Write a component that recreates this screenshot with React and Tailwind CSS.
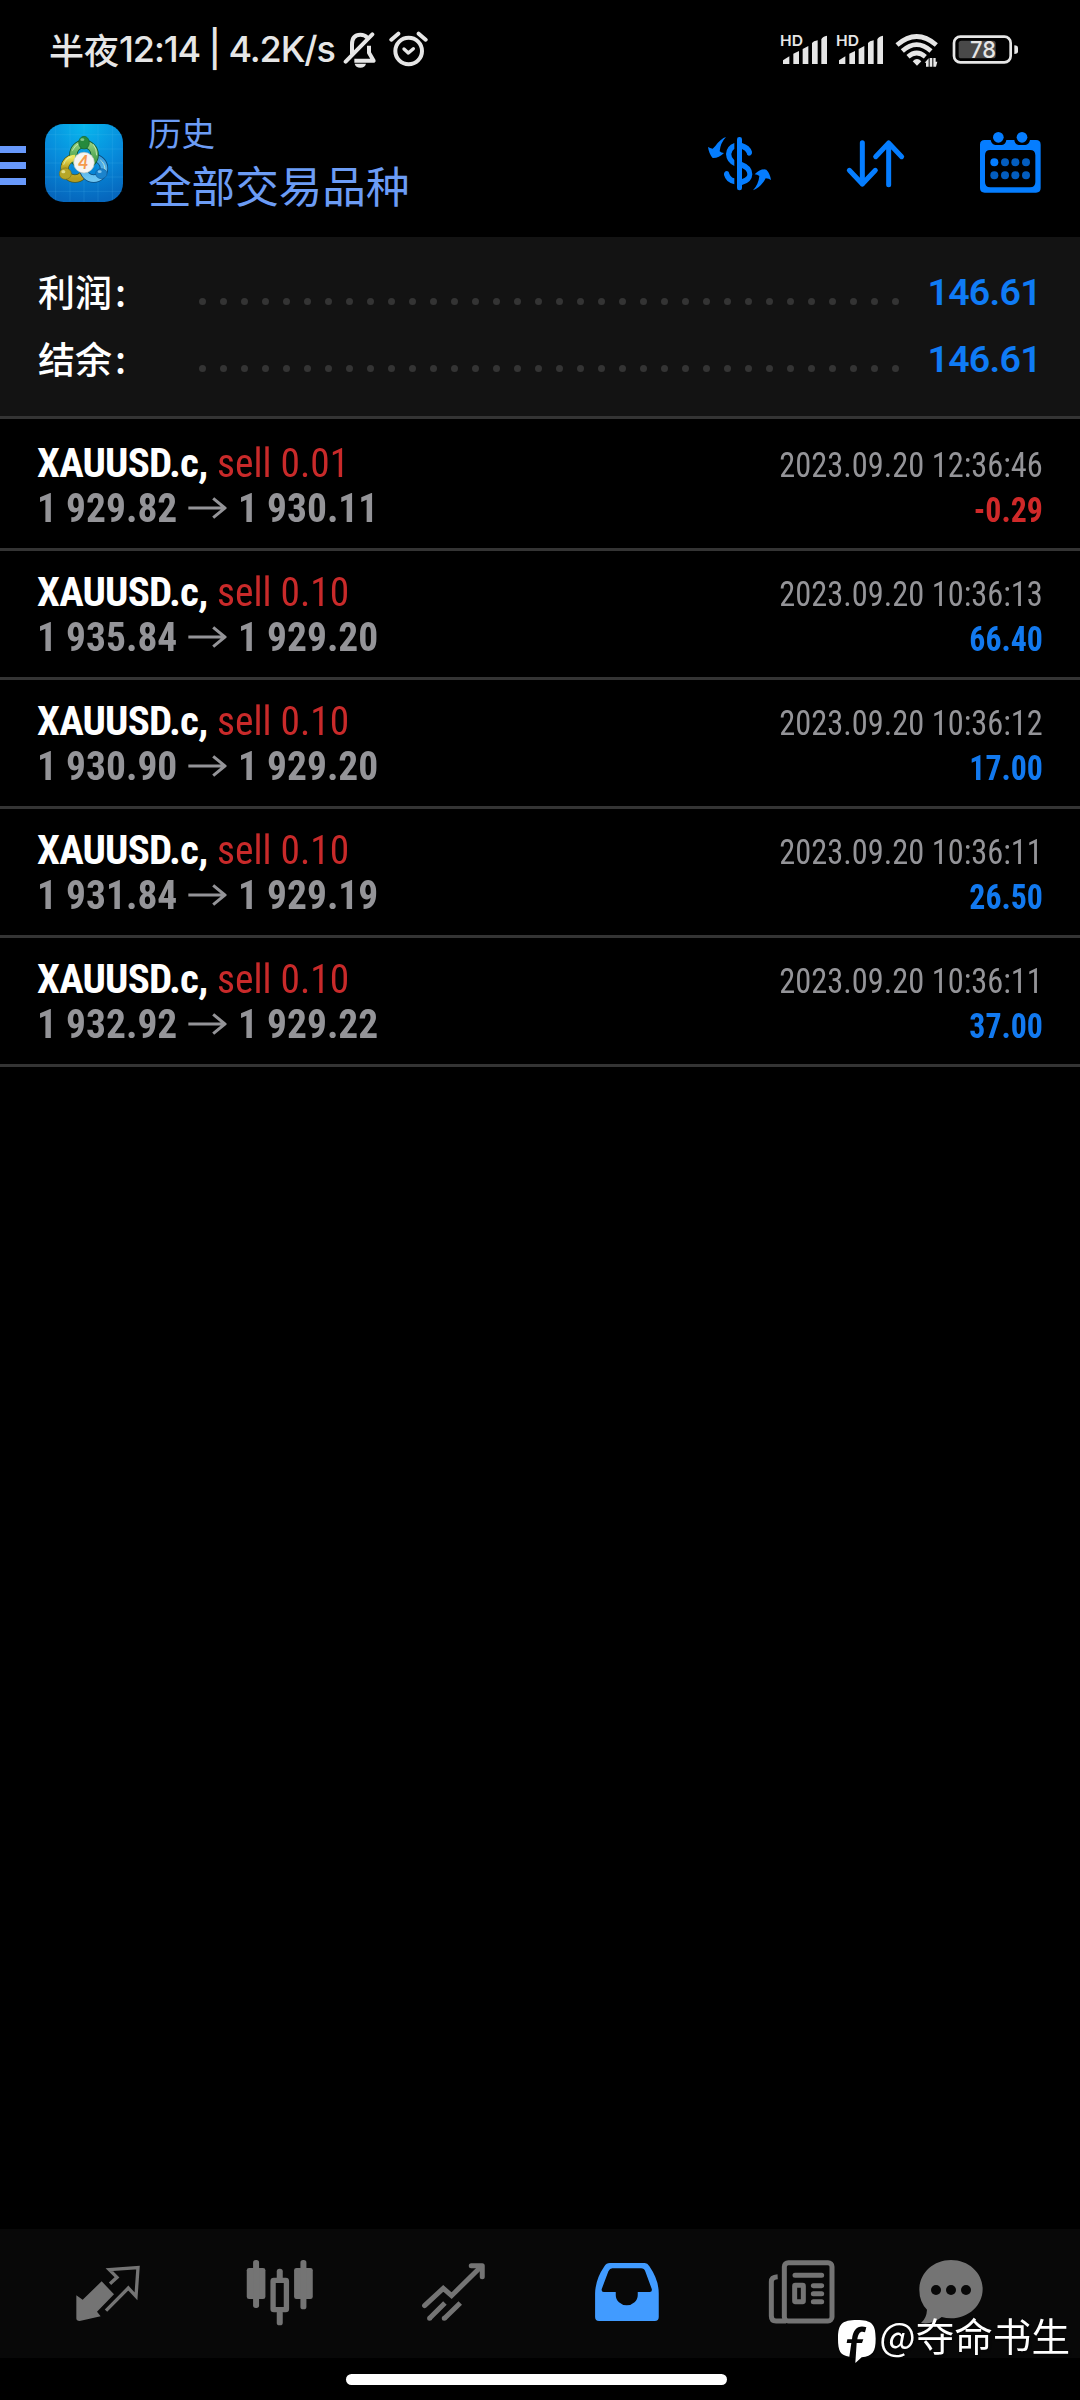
import React from 'react';

const trades = [
  { id: 1, symbol: 'XAUUSD.c', side: 'sell 0.01', open: '1 929.82', close: '1 930.11', time: '2023.09.20 12:36:46', profit: '-0.29' },
  { id: 2, symbol: 'XAUUSD.c', side: 'sell 0.10', open: '1 935.84', close: '1 929.20', time: '2023.09.20 10:36:13', profit: '66.40' },
  { id: 3, symbol: 'XAUUSD.c', side: 'sell 0.10', open: '1 930.90', close: '1 929.20', time: '2023.09.20 10:36:12', profit: '17.00' },
  { id: 4, symbol: 'XAUUSD.c', side: 'sell 0.10', open: '1 931.84', close: '1 929.19', time: '2023.09.20 10:36:11', profit: '26.50' },
  { id: 5, symbol: 'XAUUSD.c', side: 'sell 0.10', open: '1 932.92', close: '1 929.22', time: '2023.09.20 10:36:11', profit: '37.00' },
];

const summary = [
  { label: '利润', value: '146.61' },
  { label: '结余', value: '146.61' },
];

const DOTS = Array.from({ length: 34 });

function StatusBar() {
  return (
    <div className="h-[100px] shrink-0 flex items-start justify-between pl-[49px] pr-[60px] pt-[30px] text-[#e6e6e6]">
      <div className="flex items-center h-[39px] whitespace-nowrap">
        <span className="-mt-0.5 font-['Noto_Sans_CJK_SC',sans-serif] font-medium text-[35px] leading-[39px]">半夜</span>
        <span className="font-['Inter',sans-serif] font-medium text-[36px] leading-[39px] tracking-[-1.1px] w-[224px]">
          12:14 | 4.2K/s
        </span>
        {/* Muted bell + alarm */}
        <svg width="85" height="39" viewBox="1030 90 255 117" fill="none" stroke="currentColor" strokeWidth="12">
          <path d="M1057 163V133C1057 112 1067 104 1082 104C1091 104 1098 107 1103 113" />
          <path d="M1038 185L1118 103" strokeLinecap="round" />
          <path d="M1108 137V158L1122 182H1064" strokeLinejoin="round" />
          <path d="M1065 191H1099Q1096 203 1082 203Q1068 203 1065 191Z" fill="currentColor" stroke="none" />
          <circle cx="1227" cy="153" r="40" />
          <path d="M1175 119L1196 101M1278 119L1257 101" strokeLinecap="round" />
          <path d="M1213 147L1226 159L1241 146" strokeLinecap="round" strokeLinejoin="round" strokeWidth="10" />
        </svg>
      </div>
      <svg className="mt-0.5 font-['Inter',sans-serif]" width="240" height="36" viewBox="300 96 720 108" fill="currentColor">
        {[0, 168].map((dx) => (
          <g key={dx} transform={`translate(${dx} 0)`}>
            <text x="300" y="137" fontSize="44" fontWeight="600" textLength="69" lengthAdjust="spacingAndGlyphs">HD</text>
            <path d="M309 181L328 169V192H309ZM340 161L357 153V192H340ZM368 147L385 138V192H368ZM396 129Q400 123 413 121V192H396ZM424 118Q428 109 441 107V192H424Z" />
          </g>
        ))}
        <g fill="none" stroke="currentColor" strokeWidth="14">
          <path d="M651 135Q710 84 769 135" />
          <path d="M667 153Q710 115 753 153" />
          <path d="M684 170Q710 148 736 170" />
        </g>
        <path d="M698 184Q711 170 724 184L711 197Z" />
        <path d="M734 188L746 175V200H738V188ZM749 174H757V200H749ZM760 174H767V185H772L768 200H760Z" />
        <rect x="822" y="110" width="170" height="77" rx="19" fill="none" stroke="currentColor" strokeWidth="8" />
        <rect x="836" y="122" width="111" height="53" rx="8" fill="#494949" />
        <path d="M1003 136Q1014 137 1014 143V155Q1014 161 1003 162Z" />
        <text x="870" y="175" fontSize="70" fontWeight="500" textLength="78" lengthAdjust="spacingAndGlyphs">78</text>
      </svg>
    </div>
  );
}

function AppLogo() {
  return (
    <svg width="78" height="78" viewBox="0 0 234 234">
      <defs>
        <radialGradient id="sky" cx="0.5" cy="0" r="1">
          <stop offset="0" stopColor="#08b8ee" />
          <stop offset="0.55" stopColor="#078bdb" />
          <stop offset="1" stopColor="#0667bd" />
        </radialGradient>
        <linearGradient id="green" x1="0" y1="0" x2="0" y2="1">
          <stop offset="0" stopColor="#8fce7c" />
          <stop offset="1" stopColor="#2d8f3b" />
        </linearGradient>
        <linearGradient id="gold" x1="0" y1="0" x2="0" y2="1">
          <stop offset="0" stopColor="#ece45b" />
          <stop offset="1" stopColor="#b59d1f" />
        </linearGradient>
        <linearGradient id="aqua" x1="0" y1="0" x2="0" y2="1">
          <stop offset="0" stopColor="#3c9fe0" />
          <stop offset="1" stopColor="#6cc5f2" />
        </linearGradient>
      </defs>
      <rect width="234" height="234" rx="56" fill="url(#sky)" />
      <path d="M32 4V230M75 2V232M117 0V234M159 2V232M202 4V230M2 32H232M0 75H234M0 117H234M0 159H234M2 202H232" stroke="#5cc4f5" strokeOpacity="0.25" strokeWidth="2" />
      <g fill="none">
        <circle cx="90" cy="133" r="31" stroke="#4f5a1c" strokeWidth="25" />
        <circle cx="90" cy="133" r="31" stroke="url(#gold)" strokeWidth="20" />
        <circle cx="146" cy="133" r="31" stroke="#0b4c7c" strokeWidth="25" />
        <circle cx="146" cy="133" r="31" stroke="url(#aqua)" strokeWidth="20" />
        <circle cx="117" cy="92" r="32" stroke="#135c33" strokeWidth="25" />
        <circle cx="117" cy="92" r="32" stroke="url(#green)" strokeWidth="20" />
        <path d="M59 133A31 31 0 0 1 90 102" stroke="url(#gold)" strokeWidth="20" />
      </g>
      <path d="M82 80Q90 63 103 58M145 61Q155 74 155 94M56 122Q62 102 80 98M166 108Q180 119 180 139" fill="none" stroke="#e3f5c8" strokeOpacity="0.7" strokeWidth="3" />
      <ellipse cx="117" cy="56" rx="16" ry="19" fill="#258a3d" stroke="#176330" strokeWidth="2" />
      <ellipse cx="112" cy="47" rx="6" ry="4" fill="#94d49a" opacity="0.8" />
      <ellipse cx="61" cy="149" rx="18" ry="17" fill="#b7a727" stroke="#77701b" strokeWidth="2" />
      <ellipse cx="55" cy="143" rx="6" ry="5" fill="#f0eda0" opacity="0.8" />
      <ellipse cx="169" cy="149" rx="17" ry="15" fill="#1b83cc" stroke="#125c9c" strokeWidth="2" />
      <ellipse cx="164" cy="143" rx="6" ry="4" fill="#9ed7f7" opacity="0.8" />
      <circle cx="117" cy="116" r="31" fill="#f5f4f2" stroke="#b8c4bc" strokeWidth="2" />
      <text x="115" y="135" textAnchor="middle" fontSize="54" fontWeight="700" fontStyle="italic" fill="#f49a4c" fontFamily="Lato, sans-serif">4</text>
    </svg>
  );
}

function Header() {
  return (
    <header className="h-[137px] shrink-0 flex items-start pr-[33px]">
      <div className="w-[26px] mt-[46px] flex flex-col gap-[9px]">
        <span className="h-[7px] bg-[#6899fb]" />
        <span className="h-[7px] bg-[#6899fb]" />
        <span className="h-[7px] bg-[#6899fb]" />
      </div>
      <div className="ml-[19px] mt-6">
        <AppLogo />
      </div>
      <div className="ml-[25px] mt-3 flex flex-col text-[#6c9cf5] font-['Noto_Sans_CJK_SC',sans-serif]">
        <span className="text-[33.5px] leading-[40px]">历史</span>
        <span className="mt-1.5 text-[43.6px] leading-[52px]">全部交易品种</span>
      </div>
      <div className="ml-auto mt-[26px] flex gap-16 text-[#057dff]">
        {/* Currency */}
        <svg width="72" height="72" viewBox="69 378 216 216" fill="currentColor">
          <path d="M138 411Q123 415 106 438L98 446Q90 445 84 441Q87 462 98 474Q116 475 132 459Q124 459 119 454Q121 429 138 411Z" />
          <path d="M219 571Q236 566 252 544L257 535Q267 536 273 540Q270 520 259 509Q244 504 224 523Q232 523 238 528Q236 552 219 571Z" />
          <rect x="171" y="411" width="15" height="160" rx="7" />
          <path d="M163 429Q139 438 138 462Q139 487 163 498V481Q144 462 163 446Z" />
          <path d="M186 429Q210 436 216 455Q217 466 206 467Q200 466 200 459Q197 451 186 447Z" />
          <path d="M186 486Q217 497 217 523Q216 548 186 555V537Q203 531 202 522Q201 510 186 504Z" />
          <path d="M163 553Q138 548 132 525Q131 514 141 513Q147 514 148 521Q151 531 163 535Z" />
        </svg>
        {/* Sort */}
        <svg width="72" height="72" viewBox="477 378 216 216" fill="none" stroke="currentColor" strokeWidth="15" strokeLinecap="round" strokeLinejoin="round">
          <path d="M547 428V552M508 511L547 552L586 511" />
          <path d="M626 554V429M587 470L626 429L665 470" />
        </svg>
        {/* Calendar */}
        <svg width="72" height="72" viewBox="885 378 216 216" fill="currentColor">
          <path fillRule="evenodd" d="M914 420H932Q935 434 946 435H966Q977 434 979 420H1003Q1005 434 1016 435H1036Q1047 434 1050 420H1068Q1082 420 1082 434V564Q1082 578 1068 578H914Q900 578 900 564V434Q900 420 914 420ZM931 450Q915 450 915 466V546Q915 562 931 562H1050Q1066 562 1066 546V466Q1066 450 1050 450Z" />
          <circle cx="955" cy="412" r="16" />
          <circle cx="1026" cy="412" r="16" />
          <circle cx="943" cy="487" r="12" />
          <g opacity="0.75">
            <circle cx="975" cy="487" r="12" />
            <circle cx="1006" cy="487" r="12" />
            <circle cx="1038" cy="487" r="12" />
            <circle cx="943" cy="526" r="12" />
            <circle cx="975" cy="526" r="12" />
            <circle cx="1006" cy="526" r="12" />
            <circle cx="1038" cy="526" r="12" />
          </g>
        </svg>
      </div>
    </header>
  );
}

function Summary() {
  return (
    <section className="h-[182px] shrink-0 bg-[#131313] border-b-[3px] border-[#343434] pt-[22px] pl-[38px] pr-[39px]">
      {summary.map((item) => (
        <div key={item.label} className="h-[67px] flex items-center">
          <span className="w-[161px] -mt-0.5 font-['Noto_Sans_CJK_SC',sans-serif] font-medium text-[37px] leading-[67px]">
            {item.label}<span className="ml-[3px]">:</span>
          </span>
          <div className="w-[700px] mt-[17px] flex justify-between">
            {DOTS.map((_, i) => (
              <span key={i} className="size-[7px] rounded-full bg-[#343434]" />
            ))}
          </div>
          <span className="ml-auto font-['Roboto',sans-serif] font-semibold text-[37.5px] leading-[67px] tracking-[-0.7px] text-[#0f7bf5]">
            {item.value}
          </span>
        </div>
      ))}
    </section>
  );
}

function TradeRow({ trade }) {
  const isLoss = trade.profit.startsWith('-');

  return (
    <li className="h-[129px] border-b-[3px] border-[#343434] pt-[19px] pl-[37px] pr-[37px] whitespace-nowrap font-['Roboto_Condensed','Roboto',sans-serif]">
      <div className="h-[45px] flex items-baseline justify-between leading-[45px]">
        <div className="flex items-baseline text-[41px]">
          <span className="font-bold tracking-[-0.8px]">{trade.symbol},</span>
          <span className="ml-[10px] origin-left scale-x-[0.96] text-[#c92a2a]">{trade.side}</span>
        </div>
        <span className="origin-right scale-x-[0.925] text-[35px] text-[#949498]">{trade.time}</span>
      </div>
      <div className="h-[45px] flex items-baseline justify-between leading-[45px]">
        <div className="flex items-baseline origin-left scale-x-[0.963] text-[41px] font-bold text-[#949498]">
          <span>{trade.open}</span>
          <svg className="ml-[11px] mr-3 -mt-0.5 self-center" width="40" height="22" viewBox="0 0 114 66" preserveAspectRatio="none" fill="none" stroke="currentColor" strokeWidth="9">
            <path d="M0 33H108M74 4L109 33L74 62" />
          </svg>
          <span>{trade.close}</span>
        </div>
        <span className={`origin-right scale-x-[0.91] text-[35px] font-bold ${isLoss ? 'text-[#d02929]' : 'text-[#1279ef]'}`}>
          {trade.profit}
        </span>
      </div>
    </li>
  );
}

function BottomNav() {
  return (
    <nav className="h-[129px] shrink-0 bg-[#080808] flex items-start pl-5 pt-[29px] text-[#747474]">
      {/* Quotes */}
      <div className="w-[173.5px] flex justify-center">
        <svg width="70" height="70" viewBox="35 39 210 210" fill="currentColor">
          <path d="M124 109L161 148L110 200L121 214L58 228Q48 228 48 220V151L67 164Z" />
          <path d="M149 116L170 97L147 74L233 68L227 154L204 129L137 197" fill="none" stroke="currentColor" strokeWidth="10" />
        </svg>
      </div>
      {/* Charts */}
      <div className="w-[173.5px] flex justify-center">
        <svg width="70" height="70" viewBox="555.75 39 210 210" fill="currentColor">
          <rect x="561" y="69" width="56" height="93" rx="7" />
          <rect x="580" y="45" width="18" height="144" rx="8" />
          <rect x="703" y="69" width="56" height="93" rx="7" />
          <rect x="722" y="45" width="18" height="148" rx="8" />
          <rect x="640" y="106" width="40" height="88" rx="2" fill="none" stroke="currentColor" strokeWidth="16" />
          <rect x="651" y="71" width="18" height="36" rx="8" />
          <rect x="651" y="196" width="18" height="45" rx="8" />
        </svg>
      </div>
      {/* Trade */}
      <div className="w-[173.5px] flex justify-center">
        <svg width="70" height="70" viewBox="56.25 39 210 210" fill="none" stroke="currentColor" strokeWidth="15">
          <path d="M73 182L129 130L154 152L242 65" strokeLinecap="round" />
          <path d="M213 62H246V95" strokeLinecap="round" strokeLinejoin="round" />
          <path d="M134 174L88 220M180 174L133 220" />
          <path d="M88 220h0.1M132 220h0.1" strokeLinecap="round" />
        </svg>
      </div>
      {/* History */}
      <div className="w-[173.5px] flex justify-center text-[#419bff]">
        <svg width="70" height="70" viewBox="576.75 39 210 210" fill="currentColor">
          <path fillRule="evenodd" d="M630 54H735Q743 54 749 64Q777 105 777 145V216Q777 228 765 228H598Q586 228 586 216V145Q587 103 614 64Q620 54 630 54ZM638 70Q630 70 626 79L606 132Q604 141 612 141H648V150A33 31 0 0 0 714 150V141H750Q758 141 756 132L737 80Q733 70 724 70Z" />
        </svg>
      </div>
      {/* News */}
      <div className="w-[173.5px] flex justify-center">
        <svg width="70" height="70" viewBox="48 39 210 210" fill="none" stroke="currentColor" strokeWidth="15">
          <rect x="103" y="53" width="143" height="175" rx="12" />
          <path d="M83 95Q64 96 64 110V213Q64 228 78 228H108" />
          <path d="M135 91H215M190 122H215M190 146H215M190 170H215" strokeLinecap="round" />
          <rect x="134" y="121" width="26" height="49" rx="2" />
        </svg>
      </div>
      {/* Chat */}
      <div className="w-[126px] flex justify-center">
        <svg width="70" height="70" viewBox="498 39 210 210" fill="currentColor">
          <path d="M603 45C656 45 698 84 698 132C698 181 656 220 603 220Q588 220 575 216Q546 240 513 234Q530 219 531 194Q508 170 508 134C508 84 550 45 603 45Z" />
          <g fill="#080808">
            <circle cx="558" cy="135" r="15" />
            <circle cx="603" cy="135" r="15" />
            <circle cx="648" cy="135" r="15" />
          </g>
        </svg>
      </div>
    </nav>
  );
}

function Watermark() {
  return (
    <div className="absolute right-[10px] bottom-[37px] flex items-start text-white [filter:drop-shadow(1px_1px_1px_rgba(0,0,0,0.6))]">
      <svg width="38" height="43" viewBox="264 225 114 129" fill="currentColor">
        <path fillRule="evenodd" d="M321 225C365 225 377 237 377 281C377 320 368 333 335 337L317 353L316 353L320 294H336L340 283H322C325 264 331 257 345 262L349 247C326 239 309 251 306 283H292L290 294H304L298 335C271 331 264 318 264 281C264 237 276 225 321 225Z" />
      </svg>
      <span className="ml-[3px] -mt-[7px] text-[38.6px] leading-[43px] font-['Noto_Sans_CJK_SC',sans-serif]">
        @夺命书生
      </span>
    </div>
  );
}

export default function App() {
  return (
    <div className="relative w-[1080px] h-[2400px] overflow-hidden bg-black text-white flex flex-col">
      <StatusBar />
      <Header />
      <Summary />
      <ul className="flex-1 pt-[3px]">
        {trades.map((trade) => (
          <TradeRow key={trade.id} trade={trade} />
        ))}
      </ul>
      <BottomNav />
      <div className="h-[42px] shrink-0 pt-4 pl-[346px]">
        <div className="w-[381px] h-[11px] rounded-full bg-white" />
      </div>
      <Watermark />
    </div>
  );
}
